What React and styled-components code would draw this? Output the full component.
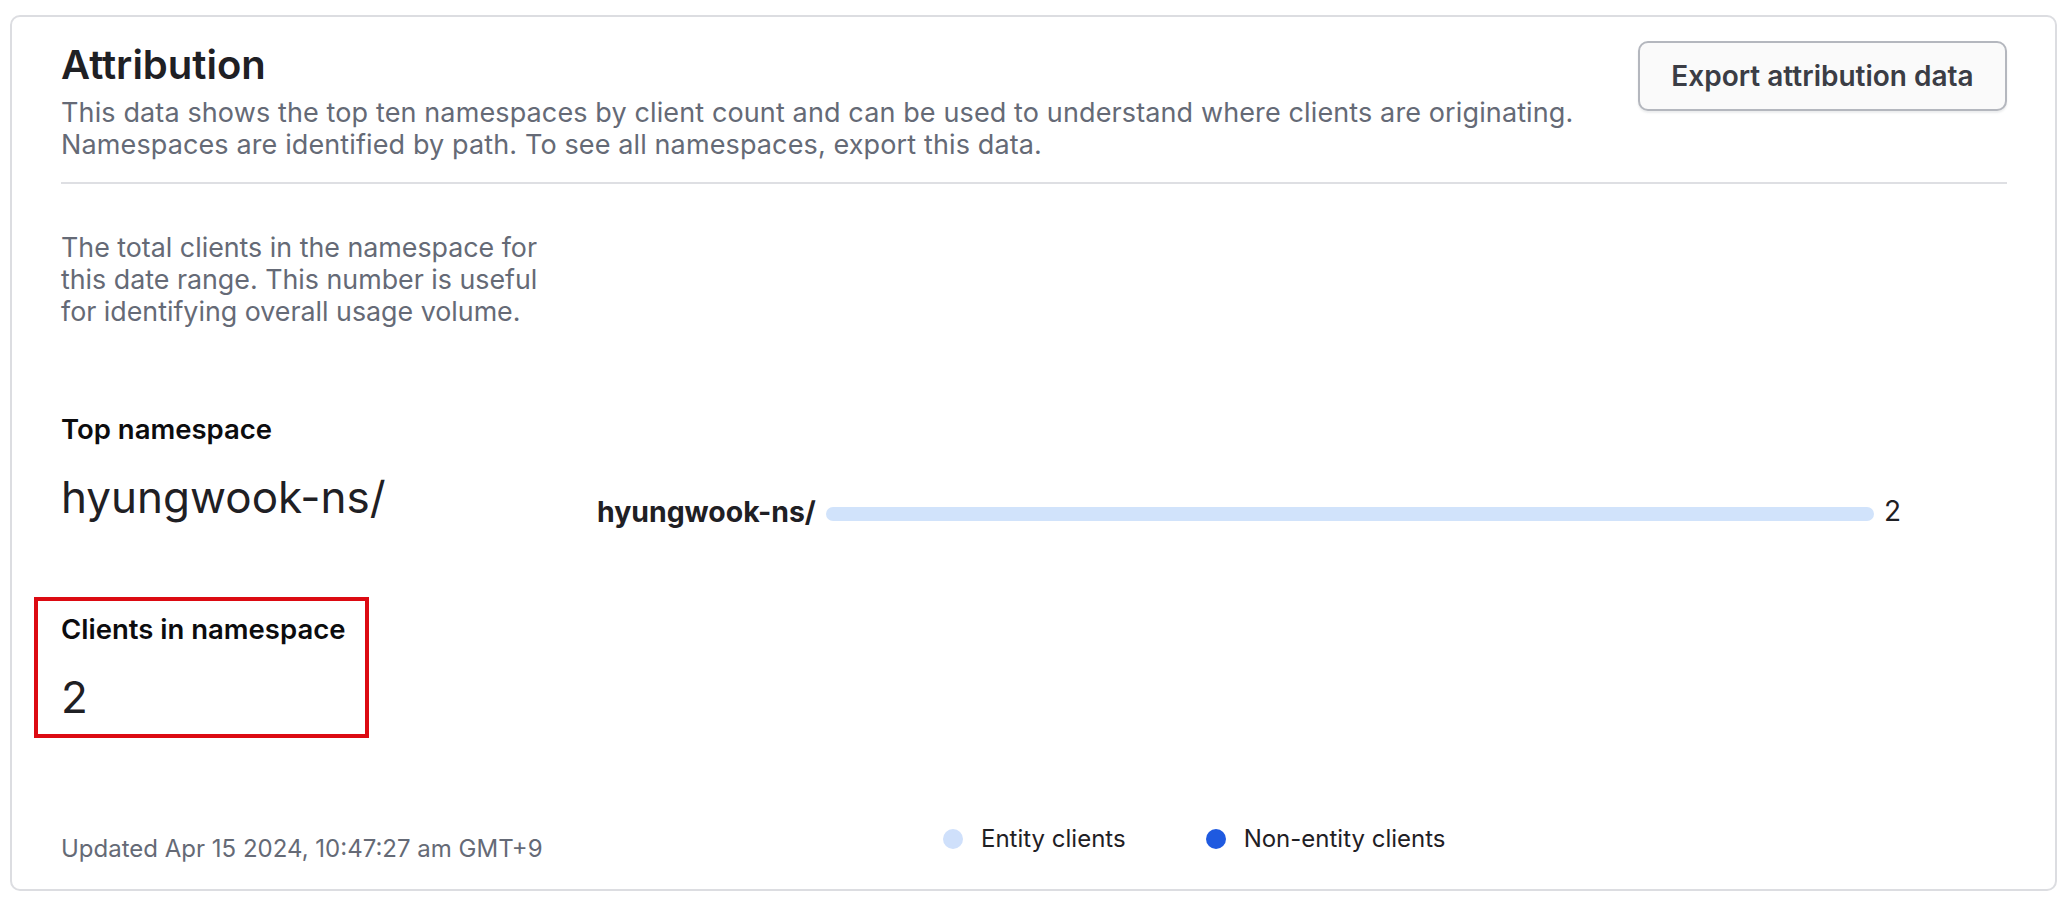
import React from 'react'
import styled, { createGlobalStyle } from 'styled-components'

const GlobalStyle = createGlobalStyle`
  * { box-sizing: border-box; }
  body {
    margin: 0;
    background: #ffffff;
    font-family: Inter, "Noto Sans", "Liberation Sans", sans-serif;
    color: #0c0c0e;
  }
`

const Card = styled.section`
  margin: 15px 0 0 10px;
  width: 2047px;
  height: 876px;
  border: 2px solid #dcdde1;
  border-radius: 10px;
  padding: 24px 48px 24px 49px;
  display: flex;
  flex-direction: column;
`

const Header = styled.header`
  display: flex;
  justify-content: space-between;
  align-items: flex-start;
`

const Title = styled.h2`
  margin: 0;
  font-size: 40px;
  line-height: 47px;
  font-weight: 600;
  color: #1f2024;
`

const Description = styled.p`
  margin: ${p => p.$top || 0}px 0 0;
  font-size: ${p => p.$size || 26}px;
  line-height: ${p => p.$lh || 32}px;
  letter-spacing: ${p => p.$track || 0}px;
  color: #656a76;
`

const ExportButton = styled.button`
  flex-shrink: 0;
  width: 369px;
  height: 70px;
  border: 2px solid #b4b7be;
  border-radius: 10px;
  background: #fafafa;
  box-shadow: 0 2px 2px rgba(101, 106, 118, 0.12);
  font-family: inherit;
  font-size: 28px;
  font-weight: 600;
  color: #3b3d45;
  cursor: pointer;
`

const Divider = styled.hr`
  margin: 22px 0 0;
  border: 0;
  height: 2px;
  background: #dedfe3;
`

const Body = styled.div`
  flex: 1;
  display: grid;
  grid-template-columns: 536px 1fr;
`

const Side = styled.div`
  display: flex;
  flex-direction: column;
`

const StatLabel = styled.div`
  margin-top: ${p => p.$top || 0}px;
  font-size: 27.5px;
  line-height: 32px;
  font-weight: 600;
  color: #0c0c0e;
`

const StatValue = styled.div`
  margin-top: 25px;
  font-size: 44px;
  line-height: 55px;
  font-weight: 400;
  color: #1f2024;
`

const Highlight = styled.div`
  margin: 72px 0 0 -27px;
  width: 335px;
  border: 4px solid #dc0a12;
  padding: 12px 0 9px 23px;
`

const Updated = styled.div`
  margin-top: auto;
  font-size: 24px;
  line-height: 32px;
  color: #656a76;
`

const Chart = styled.div`
  display: flex;
  flex-direction: column;
  padding-top: 310px;
`

const BarRow = styled.div`
  display: flex;
  align-items: center;
  height: 34px;
  margin-right: 106px;
  gap: 10px;
`

const BarLabel = styled.span`
  font-size: 28.4px;
  font-weight: 700;
  color: #1f2024;
  white-space: nowrap;
`

const Track = styled.div`
  flex: 1;
  margin-top: 6px;
  height: 14px;
`

const Bar = styled.div`
  height: 100%;
  border-radius: 7px;
  background: #d1e3fb;
`

const BarValue = styled.span`
  font-size: 28px;
  color: #1f2024;
`

const Legend = styled.div`
  margin-top: auto;
  margin-bottom: 11px;
  padding-left: 346px;
  display: flex;
  align-items: center;
  gap: 80px;
  height: 30px;
`

const LegendItem = styled.div`
  display: flex;
  align-items: center;
  gap: 18px;
  font-size: 24px;
  line-height: 30px;
  color: #1f2024;
`

const Dot = styled.span`
  width: 20px;
  height: 20px;
  border-radius: 50%;
  background: ${p => p.$color};
`

const namespaces = [{ label: 'hyungwook-ns/', entity: 2, nonEntity: 0 }]

export default function App() {
  const max = Math.max(...namespaces.map(n => n.entity + n.nonEntity))
  return (
    <>
      <GlobalStyle />
      <Card>
        <Header>
          <div>
            <Title>Attribution</Title>
            <Description $top={9} $size={27} $lh={31.5} $track={0.12}>
              This data shows the top ten namespaces by client count and can be used to understand where clients are originating.
              <br />
              Namespaces are identified by path. To see all namespaces, export this data.
            </Description>
          </div>
          <ExportButton>Export attribution data</ExportButton>
        </Header>
        <Divider />
        <Body>
          <Side>
            <Description $top={47} $size={26.8}>
              The total clients in the namespace for
              <br />
              this date range. This number is useful
              <br />
              for identifying overall usage volume.
            </Description>
            <StatLabel $top={86}>Top namespace</StatLabel>
            <StatValue>hyungwook-ns/</StatValue>
            <Highlight>
              <StatLabel>Clients in namespace</StatLabel>
              <StatValue>2</StatValue>
            </Highlight>
            <Updated>Updated Apr 15 2024, 10:47:27 am GMT+9</Updated>
          </Side>
          <Chart>
            {namespaces.map(n => (
              <BarRow key={n.label}>
                <BarLabel>{n.label}</BarLabel>
                <Track>
                  <Bar style={{ width: `${((n.entity + n.nonEntity) / max) * 100}%` }} />
                </Track>
                <BarValue>{n.entity + n.nonEntity}</BarValue>
              </BarRow>
            ))}
            <Legend>
              <LegendItem><Dot $color="#cfe0fb" />Entity clients</LegendItem>
              <LegendItem><Dot $color="#1f5ae0" />Non-entity clients</LegendItem>
            </Legend>
          </Chart>
        </Body>
      </Card>
    </>
  )
}
